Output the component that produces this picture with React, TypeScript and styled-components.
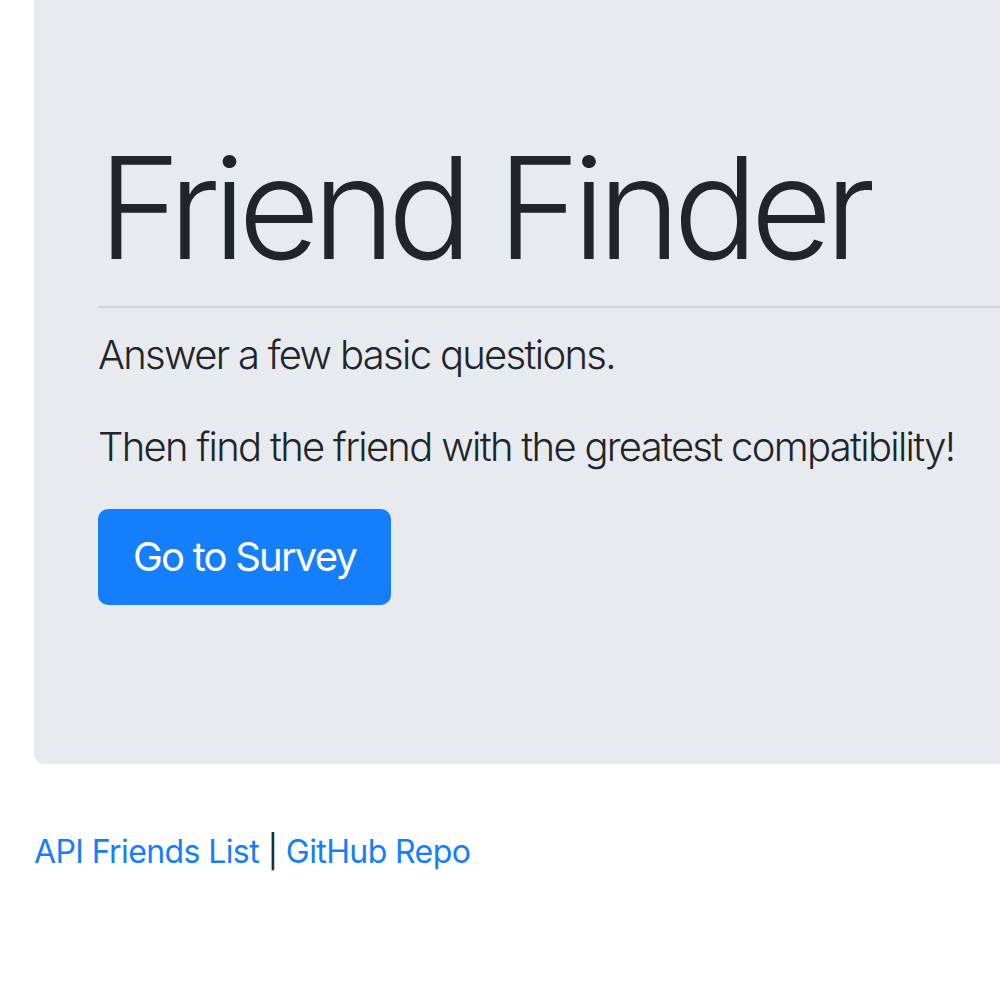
import React from "react";
import styled, { createGlobalStyle } from "styled-components";

const GlobalStyle = createGlobalStyle`
  html, body {
    margin: 0;
    padding: 0;
    background: #ffffff;
    overflow: hidden;
  }
  body {
    font-family: Inter, "Noto Sans", "Liberation Sans", sans-serif;
    color: #212529;
  }
`;

const Page = styled.div`
  width: 1200px;
  padding: 0 0 0 34px;
  box-sizing: border-box;
`;

const Jumbotron = styled.section`
  background: #e7ebef;
  border-radius: 0 0 0 10px;
  padding: 122px 64px 128px 64px;
  margin-bottom: 64px;
`;

const Title = styled.h1`
  margin: 0;
  font-size: 141px;
  font-weight: 300;
  line-height: 172.8px;
  letter-spacing: -7.6px;
  color: #212529;
`;

const Rule = styled.hr`
  margin: 11px 0 17px 0;
  border: 0;
  border-top: 2px solid rgba(0, 0, 0, 0.1);
`;

const Lead = styled.p`
  margin: 0 0 32px 0;
  font-size: 40px;
  font-weight: 300;
  line-height: 60px;
  letter-spacing: -1.7px;
  color: #212529;
`;

const ButtonRow = styled.div`
  display: flex;
  margin-bottom: 31px;
`;

const PrimaryButton = styled.a`
  display: inline-block;
  box-sizing: border-box;
  height: 96px;
  padding: 16px 33px;
  border: 2px solid #157efb;
  border-radius: 10px;
  background: #157efb;
  color: #ffffff;
  font-size: 40px;
  font-weight: 400;
  line-height: 60px;
  letter-spacing: -1.8px;
  text-decoration: none;
`;

const Footer = styled.p`
  margin: 0;
  font-size: 32px;
  line-height: 48px;
  letter-spacing: -0.6px;
  color: #212529;
`;

const Link = styled.a`
  color: #157efb;
  text-decoration: none;
`;

export default function App() {
  return (
    <>
      <GlobalStyle />
      <Page>
        <Jumbotron>
          <Title>Friend Finder</Title>
          <Rule />
          <Lead>Answer a few basic questions.</Lead>
          <Lead>Then find the friend with the greatest compatibility!</Lead>
          <ButtonRow>
            <PrimaryButton href="#survey">Go to Survey</PrimaryButton>
          </ButtonRow>
        </Jumbotron>
        <Footer>
          <Link href="#api">API Friends List</Link> | <Link href="#repo">GitHub Repo</Link>
        </Footer>
      </Page>
    </>
  );
}
